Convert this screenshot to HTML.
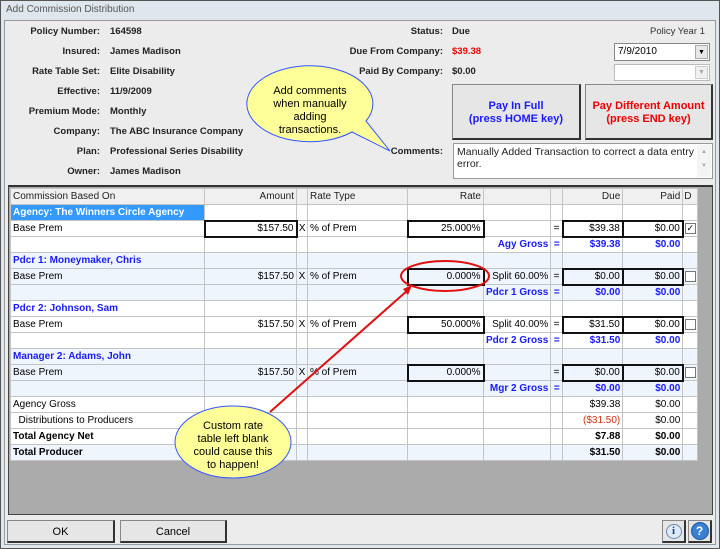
<!DOCTYPE html>
<html><head><meta charset="utf-8"><style>
*{box-sizing:border-box;margin:0;padding:0}
body{width:720px;height:549px;overflow:hidden;background:#dfe6ee;font-family:"Liberation Sans",sans-serif;font-size:10px;color:#000;position:relative}
.win{position:absolute;left:0;top:0;width:720px;height:549px;border:1px solid #555}
.title{position:absolute;left:6px;top:4px;font-size:10px;color:#555}
.panel{position:absolute;left:4px;top:20px;width:712px;height:525px;background:#ececec;border:1px solid #999}
.a{position:absolute;white-space:nowrap}
.lb{font-weight:bold;text-align:right;color:#222;font-size:9.5px}
.v{font-weight:bold;color:#222;font-size:9.5px}
.grid{position:absolute;left:8px;top:185px;width:705px;height:330px;background:#ababab;border:1px solid #444;border-top:2px solid #333}
table{position:absolute;left:1px;top:1px;border-collapse:collapse;table-layout:fixed}
td{height:16px;border:1px solid #c4c4c4;padding:0 2px;white-space:nowrap;overflow:hidden;font-size:10px}
tr.w td{background:#fff}
tr.l td{background:#eef5fc}
tr.h td{background:#f0f0f0;color:#222}
.r{text-align:right}
.c{text-align:center}
.bl{color:#1a1aff;font-weight:bold}
.b{font-weight:bold}
.box{border:2px solid #111 !important}
.chk{display:inline-block;width:11px;height:11px;border:1px solid #777;background:#fff;vertical-align:middle;font-size:9px;line-height:9px;text-align:center}
.btn{position:absolute;background:#e6e6e6;border:1px solid #888;border-right:2px solid #333;border-bottom:2px solid #333;text-align:center;font-weight:bold}
</style></head><body>
<div class="win"></div>
<div class="title">Add Commission Distribution</div>
<div class="panel"></div>

<div class="a lb" style="left:0;width:100px;top:26px">Policy Number:</div><div class="a v" style="left:110px;top:26px">164598</div>
<div class="a lb" style="left:0;width:100px;top:46px">Insured:</div><div class="a v" style="left:110px;top:46px">James Madison</div>
<div class="a lb" style="left:0;width:100px;top:66px">Rate Table Set:</div><div class="a v" style="left:110px;top:66px">Elite Disability</div>
<div class="a lb" style="left:0;width:100px;top:86px">Effective:</div><div class="a v" style="left:110px;top:86px">11/9/2009</div>
<div class="a lb" style="left:0;width:100px;top:106px">Premium Mode:</div><div class="a v" style="left:110px;top:106px">Monthly</div>
<div class="a lb" style="left:0;width:100px;top:126px">Company:</div><div class="a v" style="left:110px;top:126px">The ABC Insurance Company</div>
<div class="a lb" style="left:0;width:100px;top:146px">Plan:</div><div class="a v" style="left:110px;top:146px">Professional Series Disability</div>
<div class="a lb" style="left:0;width:100px;top:166px">Owner:</div><div class="a v" style="left:110px;top:166px">James Madison</div>

<div class="a lb" style="left:300px;width:143px;top:26px">Status:</div><div class="a v" style="left:452px;top:26px">Due</div>
<div class="a lb" style="left:300px;width:143px;top:46px">Due From Company:</div><div class="a v" style="left:452px;top:46px;color:#e00">$39.38</div>
<div class="a lb" style="left:300px;width:143px;top:66px">Paid By Company:</div><div class="a v" style="left:452px;top:66px">$0.00</div>
<div class="a" style="left:650px;top:26px;color:#333;font-size:9.5px">Policy Year 1</div>
<div class="a" style="left:614px;top:43px;width:96px;height:18px;background:#fff;border:1px solid #888;padding:2px 3px;font-size:10px">7/9/2010<span style="position:absolute;right:1px;top:1px;width:13px;height:14px;background:#e8e8e8;border:1px solid #aaa;font-size:7px;text-align:center;line-height:13px">▼</span></div>
<div class="a" style="left:614px;top:64px;width:96px;height:17px;background:#fff;border:1px solid #bbb"><span style="position:absolute;right:1px;top:1px;width:13px;height:13px;background:#f0f0f0;border:1px solid #ccc;font-size:7px;color:#aaa;text-align:center;line-height:12px">▼</span></div>
<div class="btn" style="left:452px;top:84px;width:129px;height:56px;padding-top:15px;color:#1a1aff;font-size:11px;line-height:13px">Pay In Full<br>(press HOME key)</div>
<div class="btn" style="left:585px;top:84px;width:128px;height:56px;padding-top:15px;color:#e00;font-size:11px;line-height:13px">Pay Different Amount<br>(press END key)</div>
<div class="a lb" style="left:300px;width:143px;top:146px">Comments:</div>
<div class="a" style="left:453px;top:143px;width:260px;height:36px;background:#fff;border:1px solid #999;padding:2px 18px 2px 3px;white-space:normal;color:#222;font-size:10.5px;line-height:12px">Manually Added Transaction to correct a data entry error.<span style="position:absolute;right:1px;top:1px;width:14px;height:32px;background:#f4f4f4;color:#aaa;font-size:6px;text-align:center;line-height:14px">▲<br>▼</span></div>

<div class="grid">
<table>
<colgroup><col style="width:194px"><col style="width:92px"><col style="width:11px"><col style="width:100px"><col style="width:76px"><col style="width:67px"><col style="width:12px"><col style="width:60px"><col style="width:60px"><col style="width:14px"></colgroup>
<tr class="h"><td>Commission Based On</td><td class="r">Amount</td><td></td><td>Rate Type</td><td class="r">Rate</td><td></td><td></td><td class="r">Due</td><td class="r">Paid</td><td style="padding:0 1px">D</td></tr>
<tr class="w"><td class="b" style="background:#3399ff;color:#fff">Agency: The Winners Circle Agency</td><td></td><td></td><td></td><td></td><td></td><td></td><td></td><td></td><td></td></tr>
<tr class="w"><td>Base Prem</td><td class="r box">$157.50</td><td class="c" style="padding:0">X</td><td>% of Prem</td><td class="r box">25.000%</td><td></td><td class="c" style="padding:0">=</td><td class="r box">$39.38</td><td class="r box">$0.00</td><td style="padding:0 1px"><span class="chk">✓</span></td></tr>
<tr class="w"><td></td><td></td><td></td><td></td><td></td><td class="r bl">Agy Gross</td><td class="c bl" style="padding:0">=</td><td class="r bl">$39.38</td><td class="r bl">$0.00</td><td></td></tr>
<tr class="l"><td class="bl">Pdcr 1: Moneymaker, Chris</td><td></td><td></td><td></td><td></td><td></td><td></td><td></td><td></td><td></td></tr>
<tr class="l"><td>Base Prem</td><td class="r">$157.50</td><td class="c" style="padding:0">X</td><td>% of Prem</td><td class="r box">0.000%</td><td class="r">Split 60.00%</td><td class="c" style="padding:0">=</td><td class="r box">$0.00</td><td class="r box">$0.00</td><td style="padding:0 1px"><span class="chk"></span></td></tr>
<tr class="l"><td></td><td></td><td></td><td></td><td></td><td class="r bl">Pdcr 1 Gross</td><td class="c bl" style="padding:0">=</td><td class="r bl">$0.00</td><td class="r bl">$0.00</td><td></td></tr>
<tr class="w"><td class="bl">Pdcr 2: Johnson, Sam</td><td></td><td></td><td></td><td></td><td></td><td></td><td></td><td></td><td></td></tr>
<tr class="w"><td>Base Prem</td><td class="r">$157.50</td><td class="c" style="padding:0">X</td><td>% of Prem</td><td class="r box">50.000%</td><td class="r">Split 40.00%</td><td class="c" style="padding:0">=</td><td class="r box">$31.50</td><td class="r box">$0.00</td><td style="padding:0 1px"><span class="chk"></span></td></tr>
<tr class="w"><td></td><td></td><td></td><td></td><td></td><td class="r bl">Pdcr 2 Gross</td><td class="c bl" style="padding:0">=</td><td class="r bl">$31.50</td><td class="r bl">$0.00</td><td></td></tr>
<tr class="l"><td class="bl">Manager 2: Adams, John</td><td></td><td></td><td></td><td></td><td></td><td></td><td></td><td></td><td></td></tr>
<tr class="l"><td>Base Prem</td><td class="r">$157.50</td><td class="c" style="padding:0">X</td><td>% of Prem</td><td class="r box">0.000%</td><td></td><td class="c" style="padding:0">=</td><td class="r box">$0.00</td><td class="r box">$0.00</td><td style="padding:0 1px"><span class="chk"></span></td></tr>
<tr class="l"><td></td><td></td><td></td><td></td><td></td><td class="r bl">Mgr 2 Gross</td><td class="c bl" style="padding:0">=</td><td class="r bl">$0.00</td><td class="r bl">$0.00</td><td></td></tr>
<tr class="w"><td>Agency Gross</td><td></td><td></td><td></td><td></td><td></td><td></td><td class="r">$39.38</td><td class="r">$0.00</td><td></td></tr>
<tr class="w"><td>&nbsp;&nbsp;Distributions to Producers</td><td></td><td></td><td></td><td></td><td></td><td></td><td class="r" style="color:#d03010">($31.50)</td><td class="r">$0.00</td><td></td></tr>
<tr class="w"><td class="b">Total Agency Net</td><td></td><td></td><td></td><td></td><td></td><td></td><td class="r b">$7.88</td><td class="r b">$0.00</td><td></td></tr>
<tr class="l"><td class="b">Total Producer</td><td></td><td></td><td></td><td></td><td></td><td></td><td class="r b">$31.50</td><td class="r b">$0.00</td><td></td></tr>
</table>
</div>

<div class="btn" style="left:7px;top:520px;width:108px;height:23px;font-weight:normal;padding-top:5px;font-size:11px">OK</div>
<div class="btn" style="left:120px;top:520px;width:107px;height:23px;font-weight:normal;padding-top:5px;font-size:11px">Cancel</div>
<div class="btn" style="left:662px;top:520px;width:24px;height:23px;padding-top:3px"><span style="display:inline-block;width:16px;height:15px;border-radius:50%;background:#dfeaf6;border:1px solid #6a8cb8;color:#1a3f8f;font-family:'Liberation Serif',serif;font-size:11px;line-height:13px">i</span></div>
<div class="btn" style="left:688px;top:520px;width:24px;height:23px;padding-top:1px"><span style="display:inline-block;width:18px;height:18px;border-radius:50%;background:#3a7fd0;border:1px solid #1f5aa0;color:#fff;font-size:12px;line-height:16px">?</span></div>

<svg style="position:absolute;left:0;top:0" width="720" height="549">
<path d="M352,132 A63,38 0 1,1 366,121 L390,151 Z" fill="#ffff99" stroke="#3355ff" stroke-width="1"/>
<text x="310" y="94" font-family="Liberation Sans" font-size="11" text-anchor="middle">Add comments</text>
<text x="310" y="107" font-family="Liberation Sans" font-size="11" text-anchor="middle">when manually</text>
<text x="310" y="120" font-family="Liberation Sans" font-size="11" text-anchor="middle">adding</text>
<text x="310" y="133" font-family="Liberation Sans" font-size="11" text-anchor="middle">transactions.</text>
<ellipse cx="445" cy="276" rx="44" ry="15" fill="none" stroke="#e01010" stroke-width="2"/>
<line x1="270" y1="412" x2="408" y2="290" stroke="#e01010" stroke-width="2"/>
<polygon points="412,285 403,289 408,295" fill="#e01010"/>
<ellipse cx="233" cy="442" rx="58" ry="36" fill="#ffff99" stroke="#3355ff" stroke-width="1"/>
<text x="233" y="429" font-family="Liberation Sans" font-size="11" text-anchor="middle">Custom rate</text>
<text x="233" y="442" font-family="Liberation Sans" font-size="11" text-anchor="middle">table left blank</text>
<text x="233" y="455" font-family="Liberation Sans" font-size="11" text-anchor="middle">could cause this</text>
<text x="233" y="468" font-family="Liberation Sans" font-size="11" text-anchor="middle">to happen!</text>
</svg>
</body></html>
